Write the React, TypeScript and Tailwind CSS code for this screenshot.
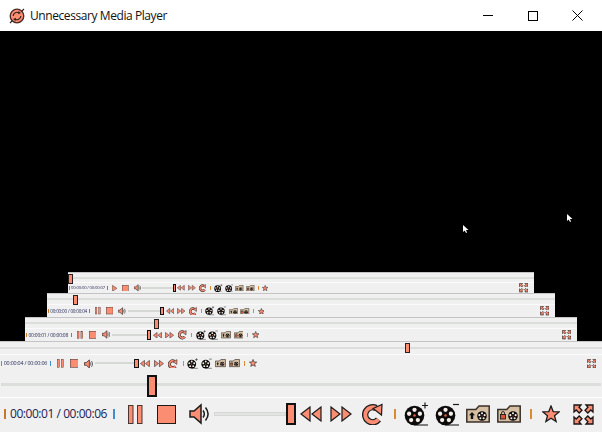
const Salmon = "#fb8d73";
const Dark = "#1c1a1a";

function PauseIcon() {
  return (
    <svg width="15" height="19" viewBox="0 0 15 19">
      <rect x="0.5" y="0.5" width="4.5" height="18" fill={Salmon} stroke="#4a3530" />
      <rect x="9.5" y="0.5" width="4.5" height="18" fill={Salmon} stroke="#4a3530" />
    </svg>
  );
}

function PlayIcon() {
  return (
    <svg width="15" height="19" viewBox="0 0 15 19">
      <path d="M1 1l13 8.500L1 18z" fill={Salmon} stroke="#4a3530" strokeWidth="1.500" />
    </svg>
  );
}

function StopIcon() {
  return (
    <svg width="19" height="19" viewBox="0 0 19 19">
      <rect x="0.5" y="0.5" width="18" height="18" fill={Salmon} stroke={Dark} />
    </svg>
  );
}

function SpeakerIcon() {
  return (
    <svg width="20" height="22" viewBox="0 0 20 22" fill="none">
      <path d="M1 8h4l7-6v18l-7-6H1z" fill={Salmon} stroke={Dark} strokeWidth="1.500" />
      <path d="M14 7.500c1.500 2 1.500 5 0 7M16.500 4.500c3.200 4 3.200 9 0 13" stroke={Dark} strokeWidth="1.500" />
    </svg>
  );
}

function RewindIcon() {
  return (
    <svg width="22" height="16" viewBox="0 0 22 16">
      <path d="M10 1v14L1 8zM21 1v14l-9-7z" fill={Salmon} stroke={Dark} strokeWidth="1.200" />
    </svg>
  );
}

function ForwardIcon() {
  return (
    <svg width="22" height="16" viewBox="0 0 22 16">
      <path d="M1 1v14l9-7zM12 1v14l9-7z" fill={Salmon} stroke={Dark} strokeWidth="1.200" />
    </svg>
  );
}

function ReloadIcon() {
  return (
    <svg width="21" height="22" viewBox="0 0 21 22" fill="none">
      <path d="M14 5A7.500 7.500 0 1 0 16.500 16.500" stroke={Dark} strokeWidth="6.500" />
      <path d="M14 5A7.500 7.500 0 1 0 16.500 16.500" stroke={Salmon} strokeWidth="4" />
      <path d="M11 5.500L20 1.500l-.5 10.500z" fill={Salmon} stroke={Dark} strokeWidth="1.200" />
    </svg>
  );
}

function Reel({ cx, cy, r }: { cx: number; cy: number; r: number }) {
  const holes = [0, 72, 144, 216, 288].map((a) => {
    const rad = ((a - 90) * Math.PI) / 180;
    return { x: cx + Math.cos(rad) * r * 0.58, y: cy + Math.sin(rad) * r * 0.58 };
  });
  return (
    <g>
      <circle cx={cx} cy={cy} r={r} fill="#0c0a0a" />
      {holes.map((h, i) => (
        <circle key={i} cx={h.x} cy={h.y} r={r * 0.22} fill="#f5efe8" />
      ))}
      <circle cx={cx} cy={cy} r={r * 0.13} fill="#e0603c" />
    </g>
  );
}

function FilmIcon({ minus }: { minus?: boolean }) {
  return (
    <svg width="25" height="24" viewBox="0 0 25 24" fill="none">
      <Reel cx={10.500} cy={13.500} r={9.800} />
      <path d="M10 23h14" stroke="#0c0a0a" strokeWidth="1" />
      {minus ? (
        <path d="M18 2.500h6" stroke={Dark} strokeWidth="1.200" />
      ) : (
        <path d="M18 3.500h6M21 .5v6" stroke={Dark} strokeWidth="1.200" />
      )}
    </svg>
  );
}

function FolderIcon({ lock }: { lock?: boolean }) {
  return (
    <svg width="24" height="18" viewBox="0 0 24 18" fill="none">
      <path d="M.8 17V4.500h9L13 1h10.200v16z" fill="#d6bfa2" stroke="#3a3028" strokeWidth="1.500" />
      <Reel cx={16} cy={11} r={4.800} />
      {lock ? (
        <g>
          <rect x="3.500" y="9.500" width="5" height="4.500" fill="#d8573c" stroke="#111" strokeWidth="0.800" />
          <path d="M4.500 9.500V8a1.500 1.500 0 0 1 3 0v1.500" stroke="#111" strokeWidth="0.800" />
        </g>
      ) : (
        <path d="M6 7l3 3.200H7.200V14H4.800v-3.800H3z" fill="#111" />
      )}
    </svg>
  );
}

function StarIcon() {
  return (
    <svg width="18" height="18" viewBox="0 0 18 18">
      <path
        d="M9 1l2.200 5.600 6 .3-4.700 3.800 1.600 5.800L9 13.300l-5.100 3.200 1.600-5.800L.8 6.900l6-.3z"
        fill={Salmon}
        stroke={Dark}
        strokeWidth="1.300"
      />
    </svg>
  );
}

function FullscreenIcon() {
  return (
    <svg width="21" height="21" viewBox="0 0 21 21">
      {[0, 90, 180, 270].map((a) => (
        <path
          key={a}
          d="M1 1h7L6 3.200l3 3L6.200 9l-3-3L1 8z"
          fill={Salmon}
          stroke="#181414"
          strokeWidth="1.300"
          transform={`rotate(${a} 10.500 10.500)`}
        />
      ))}
    </svg>
  );
}

function LogoIcon() {
  return (
    <svg width="16" height="16" viewBox="0 0 16 16" fill="none">
      <circle cx="8" cy="8" r="6.800" fill={Salmon} stroke="#4a2a22" strokeWidth="1.300" />
      <path d="M4.200 8a3.800 3.800 0 0 1 6-3M11.800 8a3.800 3.800 0 0 1-6 3" stroke="#3a2420" strokeWidth="1.200" />
      <path d="M9.500 3l2.500 2-3 1.200zM6.500 13l-2.500-2 3-1.200z" fill="#3a2420" />
      <path d="M1 15L3.500 12.500M12.500 3.500L15 1" stroke="#3a2420" strokeWidth="1.200" />
    </svg>
  );
}

function Cursor() {
  return (
    <svg width="6" height="8" viewBox="0 0 6 8">
      <path d="M0 0v7l1.700-1.500L3 8l1-.5L3 5h2.500z" fill="#fff" />
    </svg>
  );
}

function Sep({ color }: { color: string }) {
  return <div className="w-[2px] h-[10px] shrink-0" style={{ backgroundColor: color }} />;
}

// row of the player controls, drawn at full size; the copies inside the video just shrink it
function ControlGroup({ time, playing = true, trackWidth = 72 }: { time: string; playing?: boolean; trackWidth?: number }) {
  return (
    <div className="flex items-center shrink-0">
      <Sep color="#c9772c" />
      <span className="ml-[4px] w-[99px] whitespace-nowrap text-[12px] tracking-[-0.45px] leading-none text-[#1c2350]">{time}</span>
      <div className="ml-[4px]">
        <Sep color="#3f8fd0" />
      </div>
      <div className="ml-[13px] flex">{playing ? <PauseIcon /> : <PlayIcon />}</div>
      <div className="ml-[14px] flex">
        <StopIcon />
      </div>
      <div className="ml-[13px] flex">
        <SpeakerIcon />
      </div>
      <div className="ml-[5px] h-[4px] bg-[#e2e4e2] border border-[#d6d8d6]" style={{ width: trackWidth }} />
      <div className="w-[10px] h-[22px] bg-[#fb8d73] border-2 border-[#111]" />
      <div className="ml-[4px] flex">
        <RewindIcon />
      </div>
      <div className="ml-[8px] flex">
        <ForwardIcon />
      </div>
      <div className="ml-[10px] flex">
        <ReloadIcon />
      </div>
      <div className="ml-[11px] flex">
        <Sep color="#d88a35" />
      </div>
      <div className="ml-[8px] flex">
        <FilmIcon />
      </div>
      <div className="ml-[6px] flex">
        <FilmIcon minus />
      </div>
      <div className="ml-[6px] flex">
        <FolderIcon />
      </div>
      <div className="ml-[7px] flex">
        <FolderIcon lock />
      </div>
      <div className="ml-[9px] flex">
        <Sep color="#d88a35" />
      </div>
      <div className="ml-[10px] flex">
        <StarIcon />
      </div>
    </div>
  );
}

type NestedBarProps = {
  width: number;
  sliderHeight: number;
  rowHeight: number;
  handleLeft: number;
  scale: number;
  time: string;
  playing?: boolean;
};

function NestedBar({ width, sliderHeight, rowHeight, handleLeft, scale, time, playing }: NestedBarProps) {
  return (
    <div className="shrink-0 bg-[#f0f0f0] border-t border-[#c4c4c4]" style={{ width }}>
      <div className="relative flex items-center border-b border-[#fafafa] blur-[0.3px]" style={{ height: sliderHeight - 1 }}>
        <div className="w-full h-[2px] bg-[#dcdedc]" />
        <div
          className="absolute top-[1px] w-[5px] h-[10px] bg-[#fb8d73] border border-[#2a2020]"
          style={{ left: handleLeft }}
        />
      </div>
      <div
        className="flex items-center justify-between pl-[1px] pr-[6px] blur-[0.3px]"
        style={{ height: rowHeight }}
      >
        <div style={{ zoom: scale }}>
          <ControlGroup time={time} playing={playing} trackWidth={86} />
        </div>
        <div className="flex" style={{ zoom: 0.45 }}>
          <FullscreenIcon />
        </div>
      </div>
    </div>
  );
}

export default function App() {
  return (
    <div
      className="w-[602px] h-[432px] flex flex-col overflow-hidden bg-[#f0f0f0]"
      style={{ fontFamily: '"Open Sans", "Noto Sans", sans-serif' }}
    >
      {/* title bar */}
      <div className="h-[31px] shrink-0 bg-white flex items-center">
        <div className="ml-[9px] flex">
          <LogoIcon />
        </div>
        <span className="ml-[5px] text-[12px] text-[#111] tracking-[-0.42px]">Unnecessary Media Player</span>
        <div className="ml-auto flex pr-[2px]">
          <div className="w-[45px] flex items-center justify-center">
            <div className="w-[10px] h-px bg-black" />
          </div>
          <div className="w-[45px] flex items-center justify-center">
            <div className="w-[10px] h-[10px] border border-black" />
          </div>
          <div className="w-[45px] flex items-center justify-center">
            <svg width="11" height="11" viewBox="0 0 11 11" fill="none">
              <path d="M.5.5l10 10M10.500.5l-10 10" stroke="#000" />
            </svg>
          </div>
        </div>
      </div>

      {/* video, showing older frames of the same window */}
      <div className="relative flex-1 min-h-0 bg-black flex flex-col justify-end items-center">
        <div className="absolute left-[463px] top-[194px] flex">
          <Cursor />
        </div>
        <div className="absolute left-[567px] top-[183px] flex">
          <Cursor />
        </div>
        <NestedBar width={466} sliderHeight={11} rowHeight={10} handleLeft={0} scale={0.35} time="00:00:00 / 00:00:07" playing={false} />
        <NestedBar width={508} sliderHeight={12} rowHeight={12} handleLeft={26} scale={0.38} time="00:00:00 / 00:00:04" />
        <NestedBar width={552} sliderHeight={12} rowHeight={12} handleLeft={129} scale={0.41} time="00:00:01 / 00:00:08" />
        <NestedBar width={602} sliderHeight={14} rowHeight={17} handleLeft={405} scale={0.45} time="00:00:04 / 00:00:06" />
      </div>

      {/* seek bar */}
      <div className="relative h-[25px] shrink-0 flex items-center border-b border-white box-content">
        <div className="ml-[1px] mr-[1px] w-full h-[3px] bg-[#dcdedc]" />
        <div className="absolute left-[147px] top-[3px] w-[10px] h-[22px] bg-[#fb8d73] border-2 border-[#111]" />
      </div>

      {/* controls */}
      <div className="h-[34px] shrink-0 flex items-center justify-between pl-[4px] pr-[8px] pb-[2px]">
        <ControlGroup time="00:00:01 / 00:00:06" />
        <div className="flex">
          <FullscreenIcon />
        </div>
      </div>
    </div>
  );
}
